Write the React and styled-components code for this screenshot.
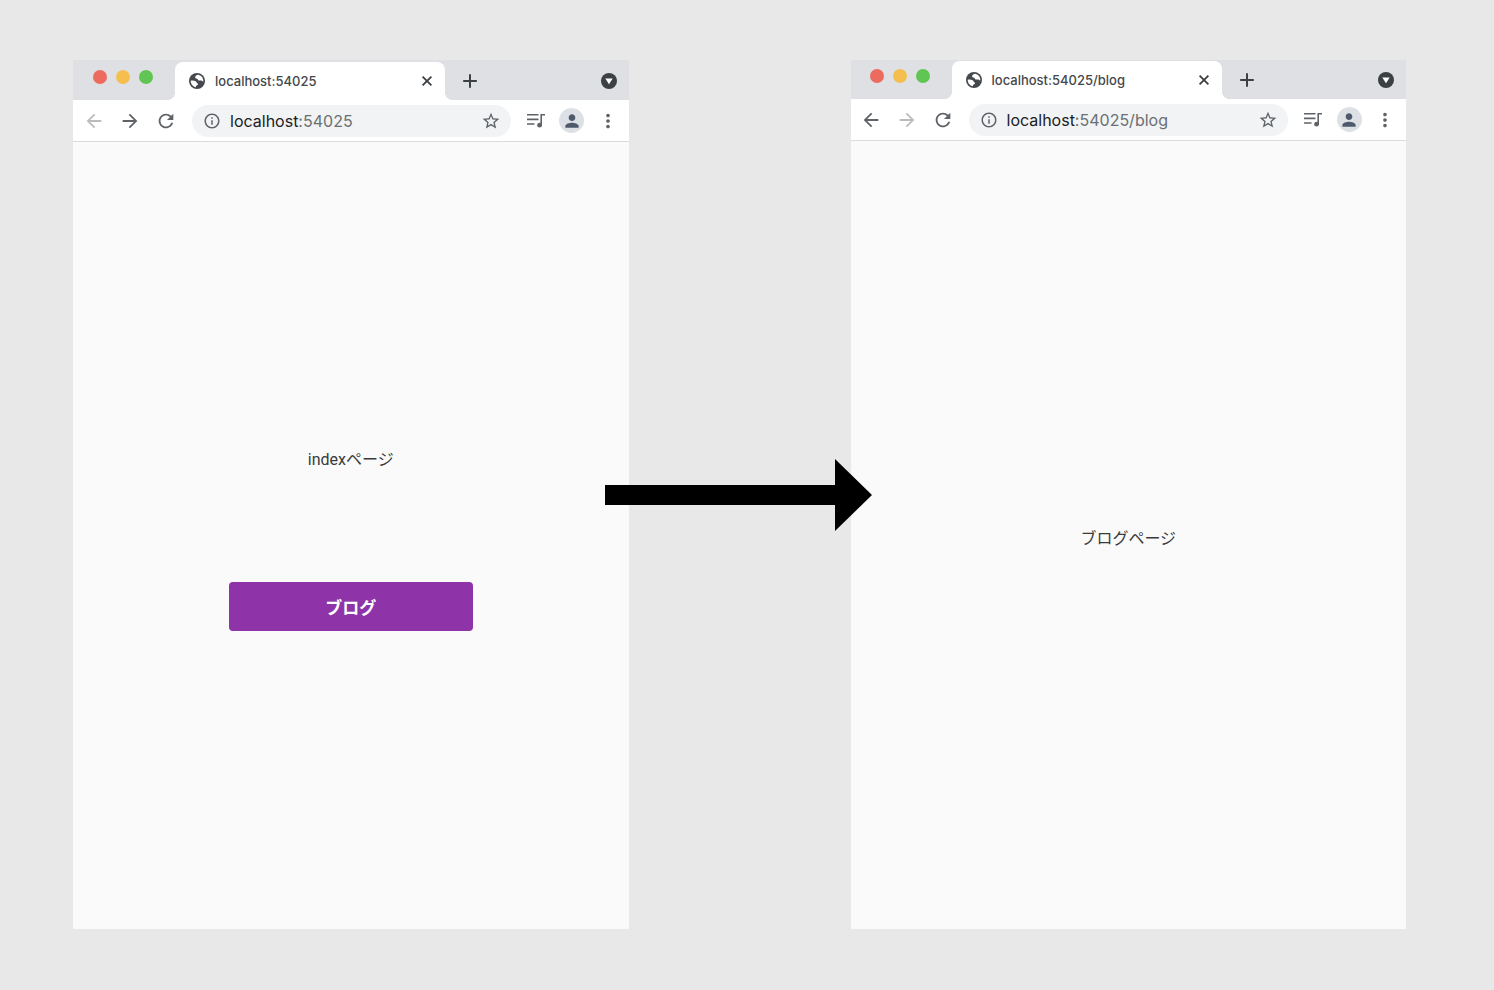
import styled, { createGlobalStyle } from "styled-components";
import {
    MdArrowBack,
    MdArrowForward,
    MdInfoOutline,
    MdMoreVert,
    MdPerson,
    MdRefresh,
    MdStarBorder,
} from "react-icons/md";

const GlobalStyle = createGlobalStyle`
    * {
        box-sizing: border-box;
    }

    body {
        margin: 0;
        background-color: #e8e8e8;
        font-family: Roboto, "Noto Sans CJK JP", sans-serif;
    }
`;

const Stage = styled.main`
    display: grid;
    grid-template-columns: 1fr 222px 1fr;
    min-height: 100vh;
    padding: 60px 88px 61px 73px;
`;

const Window = styled.section`
    display: flex;
    flex-direction: column;
    overflow: hidden;
    background-color: #fafafa;
`;

/* the second capture is cut one pixel tighter */
const Chrome = styled.header`
    margin: ${(props) => (props.$tight ? "-1px 0 0 -1px" : "0")};
    font-family: Inter, sans-serif;
`;

const TabStrip = styled.div`
    display: flex;
    align-items: flex-end;
    height: 40px;
    padding: 0 12px 0 20px;
    background-color: #dee0e4;
`;

const Lights = styled.div`
    display: flex;
    gap: 9px;
    align-self: flex-start;
    width: 82px;
    padding-top: 10px;
`;

const Light = styled.button`
    width: 14px;
    height: 14px;
    padding: 0;
    border: none;
    border-radius: 50%;
    background-color: ${(props) => props.color};
`;

const Tab = styled.div`
    position: relative;
    display: flex;
    align-items: center;
    width: 270px;
    height: 38px;
    padding: 0 10px 0 14px;
    border-radius: 8px 8px 0 0;
    background-color: #fff;
    color: #45484c;

    &::before,
    &::after {
        content: "";
        position: absolute;
        bottom: 0;
        width: 8px;
        height: 8px;
    }

    &::before {
        right: 100%;
        background: radial-gradient(circle at 0 0, transparent 8px, #fff 8px);
    }

    &::after {
        left: 100%;
        background: radial-gradient(circle at 100% 0, transparent 8px, #fff 8px);
    }
`;

const TabTitle = styled.span`
    flex: 1;
    margin-left: 10px;
    font-size: 13px;
    font-weight: 500;
    line-height: 20px;
`;

const IconButton = styled.button`
    display: flex;
    align-items: center;
    justify-content: center;
    flex: none;
    width: ${(props) => props.$width || 36}px;
    height: 32px;
    padding: 0;
    border: none;
    background: none;
    color: #5f6368;

    &:disabled {
        color: #babcbe;
    }
`;

const StripButton = styled(IconButton)`
    height: 38px;
    color: #3c4043;
`;

const Spacer = styled.div`
    flex: 1;
`;

const Toolbar = styled.div`
    display: flex;
    align-items: center;
    height: 42px;
    padding: 0 3px;
    border-bottom: 1px solid #d9dbde;
    background-color: #fff;
`;

const AddressBar = styled.div`
    display: flex;
    align-items: center;
    flex: 1;
    height: 32px;
    margin: 0 7px 0 8px;
    padding: 0 2px;
    border-radius: 16px;
    background-color: #f1f3f4;
`;

const Url = styled.div`
    flex: 1;
    color: #6b6f73;
    font-size: 16px;
    line-height: 24px;
    white-space: nowrap;
    outline: none;
`;

const Host = styled.span`
    color: #202124;
`;

const Avatar = styled.span`
    display: flex;
    align-items: center;
    justify-content: center;
    width: 25px;
    height: 25px;
    border-radius: 50%;
    background-color: #dde1e6;
    color: #4e5a6b;
`;

const Page = styled.div`
    display: flex;
    flex: 1;
    flex-direction: column;
    align-items: center;
    justify-content: center;
    gap: 110px;
    padding-top: 7px;
`;

const Label = styled.p`
    margin: 0;
    color: #3a3a3a;
    font-size: 16px;
    line-height: 24px;
`;

const BlogButton = styled.button`
    width: 44%;
    height: 49px;
    border: none;
    border-radius: 4px;
    background-color: #8e34a8;
    color: #fff;
    font-family: inherit;
    font-size: 17px;
    font-weight: 700;
`;

const Gap = styled.div`
    position: relative;
`;

/* overlaps the edges of both windows */
const Arrow = styled.svg`
    position: absolute;
    top: calc(50% - 36px);
    left: -24px;
    width: 267px;
    height: 72px;
`;

const GlobeIcon = () => (
    <svg width="16" height="16" viewBox="0 0 16 16">
        <circle cx="8" cy="8" r="8" fill="#45484c" />
        <path
            d="M8.6 1.8C7 2.4 6 3.6 6.1 4.6c.1.9 1 1 1.9 1.1.9.1.7 1.3 1.6 1.7 1.2.6 2.4-.3 3.3.3.5.3.8.8 1.4.7C14.5 5 12.3 2.1 8.6 1.8z"
            fill="#fff"
        />
        <path
            d="M1.7 7.7c1.600-.2 3.600-.2 4.900.5 1.200.7.9 1.900 2 2.300.7.300.6 1-.1 1.500-.9.600-1.800.7-1.600 2.200C3.900 13.700 1.700 11 1.700 7.700z"
            fill="#fff"
        />
    </svg>
);

const CloseIcon = () => (
    <svg width="16" height="16" viewBox="0 0 16 16">
        <path d="M3.6 3.6l8.8 8.8M12.4 3.6l-8.8 8.8" stroke="currentColor" strokeWidth="1.8" />
    </svg>
);

const PlusIcon = () => (
    <svg width="16" height="16" viewBox="0 0 16 16">
        <path d="M8 1.200v13.600M1.200 8h13.600" stroke="currentColor" strokeWidth="2" />
    </svg>
);

const DropIcon = () => (
    <svg width="16" height="16" viewBox="0 0 16 16">
        <circle cx="8" cy="8" r="8" fill="currentColor" />
        <path d="M4.300 5.500h7.400L8 11.200z" fill="#fff" />
    </svg>
);

const MediaIcon = () => (
    <svg width="18" height="16" viewBox="0 0 18 16" fill="none">
        <path
            d="M0 1.800h11.500M0 6.400h11.500M0 11h7.500M14.200 12V1.800H18"
            stroke="currentColor"
            strokeWidth="1.600"
        />
        <circle cx="12.600" cy="12.200" r="2.400" fill="currentColor" />
    </svg>
);

const Browser = ({ host, rest, canGoBack, canGoForward, tight, children }) => {
    return (
        <Window>
            <Chrome $tight={tight}>
                <TabStrip>
                    <Lights>
                        <Light color="#ed6a5e" aria-label="Close window" />
                        <Light color="#f5bf4f" aria-label="Minimize" />
                        <Light color="#61c554" aria-label="Zoom" />
                    </Lights>
                    <Tab>
                        <GlobeIcon />
                        <TabTitle>
                            {host}
                            {rest}
                        </TabTitle>
                        <StripButton $width={16} aria-label="Close tab">
                            <CloseIcon />
                        </StripButton>
                    </Tab>
                    <StripButton $width={50} aria-label="New tab">
                        <PlusIcon />
                    </StripButton>
                    <Spacer />
                    <StripButton $width={16} aria-label="Search tabs">
                        <DropIcon />
                    </StripButton>
                </TabStrip>
                <Toolbar>
                    <IconButton disabled={!canGoBack} aria-label="Back">
                        <MdArrowBack size={22} />
                    </IconButton>
                    <IconButton disabled={!canGoForward} aria-label="Forward">
                        <MdArrowForward size={22} />
                    </IconButton>
                    <IconButton aria-label="Reload">
                        <MdRefresh size={22} />
                    </IconButton>
                    <AddressBar>
                        <IconButton aria-label="Site information">
                            <MdInfoOutline size={18} />
                        </IconButton>
                        <Url
                            role="textbox"
                            aria-label="Address"
                            contentEditable
                            suppressContentEditableWarning
                            spellCheck={false}
                        >
                            <Host>{host}</Host>
                            {rest}
                        </Url>
                        <IconButton aria-label="Bookmark">
                            <MdStarBorder size={20} />
                        </IconButton>
                    </AddressBar>
                    <IconButton aria-label="Media">
                        <MediaIcon />
                    </IconButton>
                    <IconButton aria-label="Profile">
                        <Avatar>
                            <MdPerson size={20} />
                        </Avatar>
                    </IconButton>
                    <IconButton aria-label="Menu">
                        <MdMoreVert size={22} />
                    </IconButton>
                </Toolbar>
            </Chrome>
            <Page>{children}</Page>
        </Window>
    );
};

const App = () => {
    return (
        <>
            <GlobalStyle />
            <Stage>
                <Browser host="localhost" rest=":54025" canGoForward>
                    <Label>indexページ</Label>
                    <BlogButton>ブログ</BlogButton>
                </Browser>
                <Gap>
                    <Arrow viewBox="0 0 267 72">
                        <path d="M0 26h230V0l37 36-37 36V46H0z" />
                    </Arrow>
                </Gap>
                <Browser host="localhost" rest=":54025/blog" canGoBack tight>
                    <Label>ブログページ</Label>
                </Browser>
            </Stage>
        </>
    );
};

export default App;
